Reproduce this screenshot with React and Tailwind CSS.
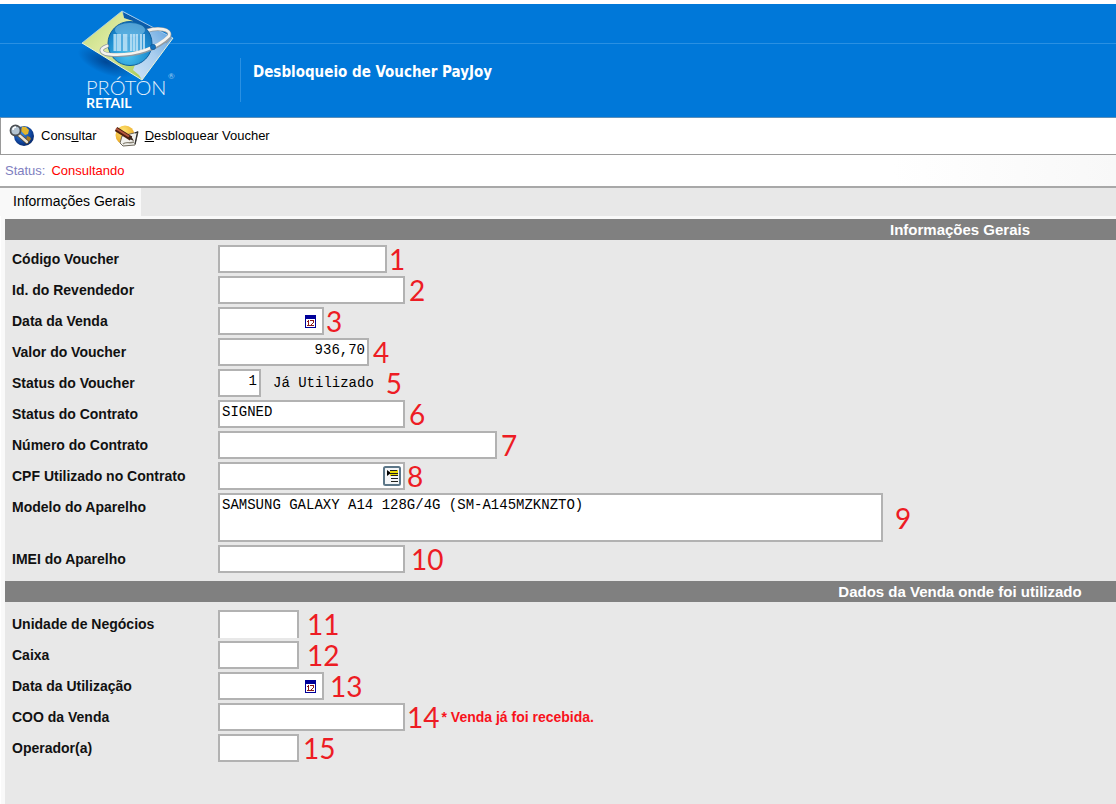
import React from 'react';

const voucherFields = [
  { id: 'codigo', label: 'Código Voucher', width: 'w-[169px]', note: '1', noteGap: 'ml-0.5' },
  { id: 'revendedor', label: 'Id. do Revendedor', width: 'w-[187px]', note: '2' },
  { id: 'dataVenda', label: 'Data da Venda', width: 'w-[106px]', note: '3', kind: 'date', noteGap: 'ml-0.5' },
  { id: 'valor', label: 'Valor do Voucher', width: 'w-[151px]', note: '4', value: '936,70', align: 'text-right' },
  { id: 'statusVoucher', label: 'Status do Voucher', width: 'w-[43px]', note: '5', value: '1', align: 'text-right', suffix: 'Já Utilizado', noteGap: 'ml-3' },
  { id: 'statusContrato', label: 'Status do Contrato', width: 'w-[187px]', note: '6', value: 'SIGNED' },
  { id: 'contrato', label: 'Número do Contrato', width: 'w-[279px]', note: '7' },
  { id: 'cpf', label: 'CPF Utilizado no Contrato', width: 'w-[187px]', note: '8', kind: 'lookup', noteGap: 'ml-0.5' },
  { id: 'modelo', label: 'Modelo do Aparelho', width: 'w-[665px]', note: '9', kind: 'area', value: 'SAMSUNG GALAXY A14 128G/4G (SM-A145MZKNZTO)', noteGap: 'ml-3' },
  { id: 'imei', label: 'IMEI do Aparelho', width: 'w-[187px]', note: '10', noteGap: 'ml-1.5' },
];

const saleFields = [
  { id: 'unidade', label: 'Unidade de Negócios', width: 'w-[81px]', note: '11', noteGap: 'ml-2', edge: 'border-b-0' },
  { id: 'caixa', label: 'Caixa', width: 'w-[81px]', note: '12', noteGap: 'ml-2' },
  { id: 'dataUso', label: 'Data da Utilização', width: 'w-[106px]', note: '13', kind: 'date', noteGap: 'ml-1.5' },
  { id: 'coo', label: 'COO da Venda', width: 'w-[187px]', note: '14', noteGap: 'ml-0.5', warning: '* Venda já foi recebida.' },
  { id: 'operador', label: 'Operador(a)', width: 'w-[81px]', note: '15', noteGap: 'ml-1' },
];

const Logo = () => (
  <svg width="104" height="104" viewBox="76 8 104 104" className="shrink-0" role="img" aria-label="Próton Retail">
    <defs>
      <linearGradient id="green" x1="0" y1="0" x2="1" y2="1">
        <stop offset="0" stopColor="#b9d87a" />
        <stop offset="0.45" stopColor="#dfeaa0" />
        <stop offset="1" stopColor="#a8cc58" />
      </linearGradient>
      <linearGradient id="ice" x1="0" y1="1" x2="1" y2="0">
        <stop offset="0" stopColor="#d8e9f8" />
        <stop offset="0.5" stopColor="#a9cdee" />
        <stop offset="1" stopColor="#3d8ed8" />
      </linearGradient>
      <radialGradient id="globe" cx="0.45" cy="0.75" r="0.8">
        <stop offset="0" stopColor="#4cc4ee" />
        <stop offset="0.6" stopColor="#1c8bcf" />
        <stop offset="1" stopColor="#1268b0" />
      </radialGradient>
      <radialGradient id="shade">
        <stop offset="0" stopColor="#003c86" stopOpacity="0.8" />
        <stop offset="1" stopColor="#003c86" stopOpacity="0" />
      </radialGradient>
    </defs>
    <ellipse cx="106" cy="62" rx="30" ry="12" fill="url(#shade)" transform="rotate(22 106 62)" />
    <path d="M122 11 L173 38 L142 80 L130 68 Z" fill="url(#ice)" />
    <path d="M123 12 L158 30 L142 29 L124 21 Z" fill="#0b5cab" />
    <path d="M82 43 L122 11 L124 18 L133 21 L136 62 L133 70 L139 75 L142 80 Z" fill="url(#green)" />
    <path d="M82 43 L122 11 L173 38" fill="none" stroke="#b5d6ef" strokeWidth="0.8" />
    <path d="M82 43 L142 80 L173 38" fill="none" stroke="#eef4d8" strokeWidth="1" />
    <path d="M146 31 C158 27 172 29 169 37 C168 39 167 40 165 42" fill="none" stroke="#8f9aa2" strokeWidth="4" />
    <path d="M146 31 C158 27 172 29 169 36 C168 39 167 40 165 41" fill="none" stroke="#f2f0ea" strokeWidth="2.6" />
    <circle cx="130" cy="43.5" r="22" fill="url(#globe)" stroke="#0d5f9f" strokeWidth="1" />
    <ellipse cx="130" cy="30" rx="15" ry="7" fill="#8fd0f0" opacity="0.5" />
    <rect x="113" y="34" width="32" height="17" fill="#7fc3ea" opacity="0.8" />
    <path d="M115 34v17M118 34v17M120 34v17M124 34v17M126 34v17M131 34v17M134 34v17M137 34v17M141 34v17M144 34v17" stroke="#e8f6fd" strokeWidth="1" />
    <path d="M122 34v17M129 34v17M139 34v17M142.5 34v17" stroke="#2a93cf" strokeWidth="0.8" />
    <path d="M107 46 C98 49 100 55 115 55 C136 56 157 49 169 37" fill="none" stroke="#8f9aa2" strokeWidth="4" strokeLinecap="round" />
    <path d="M107 46 C98 49 100 55 115 54.5 C136 55 157 48 169 36" fill="none" stroke="#f6f4ee" strokeWidth="2.7" strokeLinecap="round" />
    <circle cx="153" cy="47" r="2.7" fill="#1271bd" stroke="#0a4d8a" strokeWidth="0.5" />
    <text x="86" y="95" fill="#e4f0fb" fontFamily="Lato, sans-serif" fontWeight="300" fontSize="20">PRÓTON</text>
    <text x="168" y="79" fill="#9cc8ef" fontFamily="Lato, sans-serif" fontSize="8">®</text>
    <text x="86" y="108" fill="#ffffff" fontFamily="Lato, sans-serif" fontWeight="700" fontSize="14">RETAIL</text>
  </svg>
);

const SearchGlobeIcon = () => (
  <svg width="26" height="24" viewBox="0 0 26 24" aria-hidden="true">
    <defs>
      <radialGradient id="earth" cx="0.4" cy="0.35" r="0.75">
        <stop offset="0" stopColor="#3d8ae0" />
        <stop offset="0.6" stopColor="#10469f" />
        <stop offset="1" stopColor="#061d55" />
      </radialGradient>
    </defs>
    <circle cx="15" cy="12" r="10" fill="url(#earth)" />
    <path d="M13 2.500 l4 .5 3 3 -1 4 -3 1 -2-2 -2-2z" fill="#e2b52c" />
    <path d="M18 12 l3 1 1 2 -3 4 -2-3z" fill="#a87c20" />
    <path d="M10 11 L18 18" stroke="#5a4a30" strokeWidth="4" strokeLinecap="round" />
    <path d="M10 11 L18 18" stroke="#e9e4d8" strokeWidth="2.4" strokeLinecap="round" />
    <circle cx="6.5" cy="6.5" r="5" fill="#b4c4d2" stroke="#4c5054" strokeWidth="1.8" />
    <path d="M4 6 a3 3 0 0 1 3-3" stroke="#ffffff" strokeWidth="1.5" fill="none" />
  </svg>
);

const UnlockIcon = () => (
  <svg width="26" height="24" viewBox="0 0 26 24" aria-hidden="true">
    <defs>
      <radialGradient id="sun" cx="0.4" cy="0.3" r="0.8">
        <stop offset="0" stopColor="#ffe774" />
        <stop offset="1" stopColor="#e69a14" />
      </radialGradient>
    </defs>
    <circle cx="12" cy="11" r="9.5" fill="url(#sun)" />
    <path d="M9 12 L25 8 L22 21 L10 22 L7 19 Z" fill="#f2f2ee" stroke="#6b6659" strokeWidth="1" />
    <path d="M10 20 C13 17 16 20 21 18" stroke="#8a8578" strokeWidth="1.4" fill="none" />
    <path d="M22 9 L24.500 8 L22 20" stroke="#2e2e2e" strokeWidth="1.2" fill="none" />
    <path d="M3 5 L18 14.500" stroke="#4d1f10" strokeWidth="4.5" />
    <path d="M3 4.500 L16 12.500" stroke="#b4563e" strokeWidth="2" />
    <path d="M15 14.500 L21 17 L18 12 Z" fill="#3a2a20" />
  </svg>
);

const CalendarIcon = () => (
  <svg width="11" height="13" viewBox="0 0 11 13" aria-hidden="true" shapeRendering="crispEdges">
    <rect width="11" height="13" fill="#000099" />
    <rect x="1" y="4" width="9" height="8" fill="#ffffff" />
    <path d="M3 5h1v6h-1zM2 6h1v1h-1zM5 5h4v1h-4zM8 6h1v2h-1zM7 8h1v1h-1zM6 9h1v1h-1zM5 10h4v1h-4zM2 10h3v1h-3z" fill="#8b1a1a" />
  </svg>
);

const LookupIcon = () => (
  <svg width="18" height="20" viewBox="0 0 18 20" aria-hidden="true">
    <rect x="1" y="1" width="16" height="18" rx="1.5" fill="#f4f6f8" stroke="#5b7688" strokeWidth="2" />
    <path d="M4 4 L8 7 L4 10 Z" fill="#000000" />
    <path d="M7 4h8v6h-8z" fill="#e8d800" />
    <path d="M7 4.500h7M7 7.500h8M8 9.500h7M8 12.500h7M8 15.500h7" stroke="#22221c" strokeWidth="1" />
  </svg>
);

const Field = ({ id, label, width, note, kind, value = '', align = '', suffix, warning, noteGap = 'ml-1', edge = '' }) => {
  const box = `border-2 border-[#b2b2b2] bg-white px-0.5 pb-1 font-['Liberation_Mono',monospace] text-sm text-black outline-none ${width} ${align} ${edge}`;

  return (
    <div className="flex items-center">
      <label htmlFor={id} className="w-[206px] shrink-0 self-start text-sm leading-7 font-bold text-[#111]">
        {label}
      </label>
      <div className="relative flex shrink-0">
        {kind === 'area' ? (
          <textarea id={id} defaultValue={value} className={`h-[49px] resize-none ${box}`} />
        ) : (
          <input id={id} type="text" defaultValue={value} className={`h-7 ${box}`} />
        )}
        {kind === 'date' && (
          <button type="button" aria-label="Abrir calendário" className="absolute top-2 right-2">
            <CalendarIcon />
          </button>
        )}
        {kind === 'lookup' && (
          <button type="button" aria-label="Pesquisar" className="absolute top-1 right-1">
            <LookupIcon />
          </button>
        )}
      </div>
      {suffix && <span className="ml-3 font-['Liberation_Mono',monospace] text-sm text-black">{suffix}</span>}
      <span className={`font-[Lato,sans-serif] text-[28px] leading-7 text-[#ed1c24] ${noteGap}`}>{note}</span>
      {warning && <span className="ml-0.5 text-sm font-bold text-[#f8121c]">{warning}</span>}
    </div>
  );
};

const SectionTitle = ({ children }) => (
  <h2 className="min-w-[1910px] bg-[#808080] text-center text-[15px] leading-[21px] font-bold text-white">{children}</h2>
);

export default function App() {
  return (
    <div className="flex min-h-screen flex-col overflow-hidden bg-white pt-1 font-['Liberation_Sans',Arial,sans-serif]">
      <header className="relative flex h-[114px] items-start border-b border-[#5d8fb8] bg-[#0078d9] pt-1 pl-[76px]">
        <div className="absolute inset-x-0 top-[39px] h-px bg-[#2a90e2]" />
        <div className="relative flex items-center">
          <Logo />
          <div className="mt-10 ml-[60px] flex h-11 items-start border-l border-[#2a90e2] pl-3">
            <h1 className="pt-1 font-['DejaVu_Sans_Condensed','DejaVu_Sans',sans-serif] text-[15px] leading-5 font-bold text-white">
              Desbloqueio de Voucher PayJoy
            </h1>
          </div>
        </div>
      </header>

      <nav className="flex h-[37px] items-center gap-4 border-b border-l border-[#9a9a9a] pl-2 text-[13px] text-black">
        <button type="button" className="flex items-center gap-1.5">
          <SearchGlobeIcon />
          <span>Cons<u>u</u>ltar</span>
        </button>
        <button type="button" className="flex items-center gap-1.5">
          <UnlockIcon />
          <span><u>D</u>esbloquear Voucher</span>
        </button>
      </nav>

      <div className="flex h-[33px] items-center gap-1.5 border-b-2 border-[#a8a8a8] bg-gradient-to-r from-white from-80% to-[#f8f8f8] pl-[5px] text-[13px]">
        <span className="text-[#8080c0]">Status:</span>
        <span className="text-[#ff0000]">Consultando</span>
      </div>

      <div className="flex h-7 bg-[#e8e8e8]" role="tablist">
        <button type="button" role="tab" aria-selected="true" className="bg-[#f9f9f9] pr-1.5 pb-0.5 pl-[13px] text-sm text-black">
          Informações Gerais
        </button>
      </div>

      <main className="ml-px grow overflow-hidden border-t-[3px] border-l-4 border-[#f9f9f9] bg-[#e8e8e8]">
        <SectionTitle>Informações Gerais</SectionTitle>
        <div className="flex flex-col gap-[3px] px-[7px] pt-[5px] pb-2">
          {voucherFields.map((field) => <Field key={field.id} {...field} />)}
        </div>
        <SectionTitle>Dados da Venda onde foi utilizado</SectionTitle>
        <div className="flex flex-col gap-[3px] px-[7px] py-2">
          {saleFields.map((field) => <Field key={field.id} {...field} />)}
        </div>
      </main>
    </div>
  );
}
